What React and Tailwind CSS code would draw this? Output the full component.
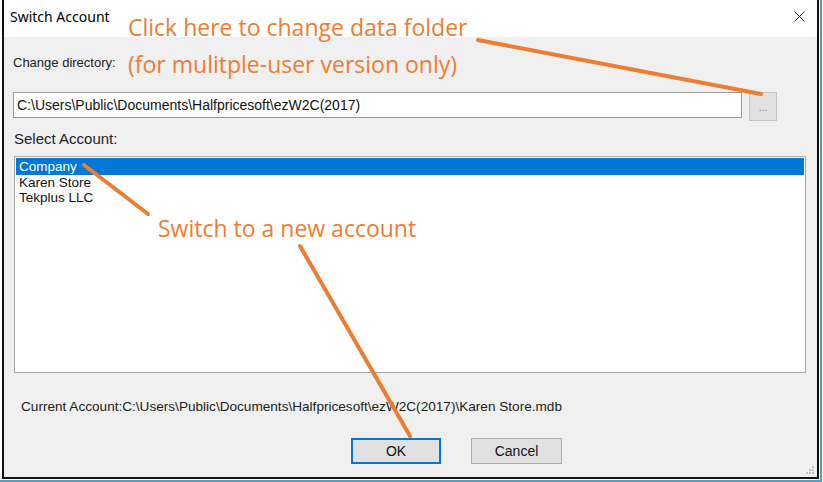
import React from "react";

const win = { fontFamily: '"Liberation Sans", Arial, sans-serif' };
const note = { fontFamily: '"Open Sans", "Noto Sans", sans-serif' };

const accounts = ["Company", "Karen Store", "Tekplus LLC"];

const App = () => {
  return (
    <div className="relative w-[823px] h-[482px] bg-white overflow-hidden" style={win}>
      {/* outer frame */}
      <div className="w-[822px] h-[482px] border-r-2 border-b-2 border-[#5b9bb5] pl-[2px] pr-[1px] pb-[1px]">
        <div className="w-[817px] h-[479px] border-l-2 border-r-2 border-b-2 border-[#111] flex flex-col">
          {/* title bar */}
          <div className="h-[37px] bg-white flex items-start pl-[6px] pr-[12px] pt-[7px] shrink-0">
            <span
              className="text-[14px] leading-[20px] text-black"
              style={{ fontFamily: '"Noto Sans", "Open Sans", sans-serif' }}
            >
              Switch Account
            </span>
            <svg className="ml-auto mt-[4px]" width="11" height="11" viewBox="0 0 11 11">
              <path d="M0.5 0.5 L10.5 10.5 M10.5 0.5 L0.5 10.5" stroke="#222" strokeWidth="1" />
            </svg>
          </div>

          {/* body */}
          <div className="flex-1 bg-[#f0f0f0] pl-[9px] pr-[10px] pt-[18px] flex flex-col text-black">
            <div className="text-[13px] leading-[16px] text-[#222]">Change directory:</div>

            <div className="flex items-start mt-[21px]">
              <div className="w-[729px] h-[26px] bg-white border border-[#9a9a9a] flex items-center pl-[3px] text-[14px] text-[#111]">
                C:\Users\Public\Documents\Halfpricesoft\ezW2C(2017)
              </div>
              <div className="ml-[7px] w-[28px] h-[29px] bg-[#e1e1e1] border border-[#c4c4c4] flex items-center justify-center text-[10px] text-[#777] leading-none pt-[2px]">
                ...
              </div>
            </div>

            <div className="mt-[10px] pl-[1px] text-[15px] leading-[16px] text-[#222]">Select Account:</div>

            <div className="mt-[9px] ml-[1px] w-[792px] h-[217px] bg-white border border-[#a8a8a8] pt-[1px] px-[1px]">
              {accounts.map((a, i) => (
                <div
                  key={a}
                  className={
                    i === 0
                      ? "h-[17px] bg-[#0078d7] text-white text-[13.5px] leading-[17px] pl-[3px]"
                      : "h-[15px] text-[#111] text-[13.5px] leading-[15px] pl-[3px]"
                  }
                >
                  {a}
                </div>
              ))}
            </div>

            <div className="mt-[26px] pl-[8px] text-[13.6px] leading-[16px] text-[#222] whitespace-nowrap">
              Current Account:C:\Users\Public\Documents\Halfpricesoft\ezW2C(2017)\Karen Store.mdb
            </div>

            <div className="mt-[23px] flex pl-[338px] gap-[30px]">
              <button className="w-[90px] h-[26px] bg-[#e1e1e1] border-2 border-[#0078d7] text-[14px] text-[#111] flex items-center justify-center">
                OK
              </button>
              <button className="w-[91px] h-[26px] bg-[#e1e1e1] border border-[#adadad] text-[14px] text-[#111] flex items-center justify-center">
                Cancel
              </button>
            </div>

            {/* resize grip */}
            <div className="ml-auto mt-auto mb-[2px] mr-[-8px]">
              <svg width="10" height="10" viewBox="0 0 10 10">
                <rect x="7" y="1" width="2" height="2" fill="#c0c0c0" />
                <rect x="4" y="4" width="2" height="2" fill="#c0c0c0" />
                <rect x="7" y="4" width="2" height="2" fill="#c0c0c0" />
                <rect x="1" y="7" width="2" height="2" fill="#c0c0c0" />
                <rect x="4" y="7" width="2" height="2" fill="#c0c0c0" />
                <rect x="7" y="7" width="2" height="2" fill="#c0c0c0" />
              </svg>
            </div>
          </div>
        </div>
      </div>

      {/* annotations */}
      <div className="absolute left-[128px] top-[11px] text-[23px] leading-[32px] text-[#ed7d31] whitespace-nowrap" style={note}>
        Click here to change data folder
      </div>
      <div className="absolute left-[128px] top-[48px] text-[23px] leading-[32px] text-[#ed7d31] whitespace-nowrap" style={note}>
        (for mulitple-user version only)
      </div>
      <div className="absolute left-[158px] top-[212px] text-[23px] leading-[32px] text-[#ed7d31] whitespace-nowrap" style={note}>
        Switch to a new account
      </div>
      <svg className="absolute inset-0 pointer-events-none" width="823" height="482">
        <g stroke="#ed7d31" strokeWidth="4" strokeLinecap="round">
          <line x1="478" y1="40" x2="761" y2="94" />
          <line x1="84" y1="165" x2="148" y2="214" />
          <line x1="300" y1="246" x2="410" y2="436" />
        </g>
      </svg>
    </div>
  );
};

export default App;
